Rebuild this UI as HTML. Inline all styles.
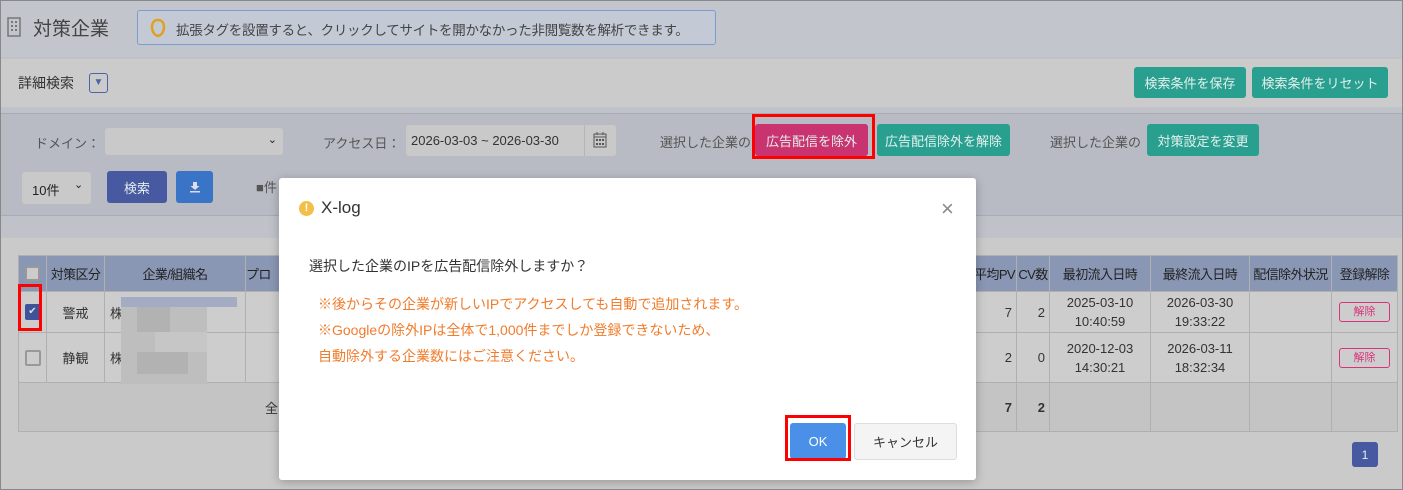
<!DOCTYPE html>
<html><head><meta charset="utf-8"><style>
*{box-sizing:border-box;margin:0;padding:0}
body{width:1403px;height:490px;position:relative;overflow:hidden;font-family:"Liberation Sans","Noto Sans CJK JP",sans-serif;font-size:13px;color:#333;background:#bfc2c9}
.a{position:absolute}
.btn{position:absolute;color:#e4efee;display:flex;align-items:center;justify-content:center;border-radius:3px;font-size:13px}
.teal{background:#29a08f}
.red{position:absolute;border:3px solid #f00}
td,th{border:1px solid #b0b0b0;font-weight:normal;text-align:center;font-size:13px;white-space:nowrap}
th{letter-spacing:-0.6px}
</style></head><body>
<div class="a" style="left:0;top:0;width:1403px;height:490px;border:1px solid #888;z-index:50;pointer-events:none"></div>
<div class="a" style="left:0;top:0;width:1403px;height:57px;background:#c2c5cc"></div>
<svg class="a" style="left:7px;top:17px" width="14" height="20" viewBox="0 0 14 20"><rect x="1" y="1" width="12" height="18" fill="none" stroke="#777" stroke-width="1.5"/><g fill="#777"><rect x="4" y="4" width="2" height="2"/><rect x="8" y="4" width="2" height="2"/><rect x="4" y="8" width="2" height="2"/><rect x="8" y="8" width="2" height="2"/><rect x="4" y="12" width="2" height="2"/><rect x="8" y="12" width="2" height="2"/></g></svg>
<div class="a" style="left:33px;top:14px;font-size:19px;color:#444">対策企業</div>
<div class="a" style="left:137px;top:10px;width:579px;height:35px;border:1px solid #7b9cd0;border-radius:3px;background:#c4cad5"></div>
<svg class="a" style="left:150px;top:18px" width="16" height="20" viewBox="0 0 16 20"><path d="M8 2C4 2 2 5 2 9c0 4 2 8 6 9 4-1 6-5 6-9 0-4-2-7-6-7z" fill="none" stroke="#e0a020" stroke-width="2.5"/></svg>
<div class="a" style="left:176px;top:19px;font-size:13.5px;color:#444;letter-spacing:-0.3px">拡張タグを設置すると、クリックしてサイトを開かなかった非閲覧数を解析できます。</div>
<div class="a" style="left:1px;top:59px;width:1401px;height:48px;background:#cbcbcb"></div>
<div class="a" style="left:18px;top:73px;font-size:14px;color:#333">詳細検索</div>
<div class="a" style="left:89px;top:73px;width:19px;height:20px;border:1px solid #4a64a8;border-radius:3px;color:#4a64a8;font-size:10px;text-align:center;line-height:18px">▼</div>
<div class="btn teal" style="left:1134px;top:67px;width:112px;height:31px">検索条件を保存</div>
<div class="btn teal" style="left:1252px;top:67px;width:136px;height:31px">検索条件をリセット</div>
<div class="a" style="left:1px;top:113px;width:1401px;height:103px;background:#b8bbc4;border-top:1px solid #a8abb4;border-bottom:1px solid #a8abb4"></div>
<div class="a" style="left:35px;top:133px;color:#555">ドメイン：</div>
<div class="a" style="left:105px;top:128px;width:178px;height:27px;background:#c9c9c9;border-radius:3px"><span class="a" style="right:6px;top:5px;font-size:11px;color:#222">⌄</span></div>
<div class="a" style="left:323px;top:133px;color:#555">アクセス日：</div>
<div class="a" style="left:406px;top:125px;width:210px;height:31px;background:#c9c9c9;border-radius:3px"></div>
<div class="a" style="left:411px;top:133px;color:#333">2026-03-03 ~ 2026-03-30</div>
<div class="a" style="left:584px;top:125px;width:1px;height:31px;background:#b5b5b5"></div>
<svg class="a" style="left:593px;top:132px" width="14" height="16" viewBox="0 0 14 16"><rect x="1" y="2" width="12" height="13" fill="none" stroke="#555"/><path d="M1 5h12M4 0v3M10 0v3" stroke="#555"/><g fill="#555"><rect x="3" y="7" width="2" height="2"/><rect x="6" y="7" width="2" height="2"/><rect x="9" y="7" width="2" height="2"/><rect x="3" y="11" width="2" height="2"/><rect x="6" y="11" width="2" height="2"/><rect x="9" y="11" width="2" height="2"/></g></svg>
<div class="a" style="left:660px;top:132px;color:#555">選択した企業の</div>
<div class="btn" style="left:755px;top:124px;width:113px;height:32px;background:#c9336f">広告配信を除外</div>
<div class="red" style="left:752px;top:114px;width:123px;height:45px"></div>
<div class="btn teal" style="left:877px;top:124px;width:133px;height:32px">広告配信除外を解除</div>
<div class="a" style="left:1050px;top:132px;color:#555">選択した企業の</div>
<div class="btn teal" style="left:1147px;top:124px;width:112px;height:32px">対策設定を変更</div>
<div class="a" style="left:22px;top:172px;width:69px;height:32px;background:#c9c9c9;border-radius:3px"></div>
<div class="a" style="left:32px;top:180px;color:#222">10件</div><div class="a" style="left:74px;top:178px;color:#222;font-size:11px">⌄</div>
<div class="btn" style="left:107px;top:171px;width:60px;height:32px;background:#4759a0">検索</div>
<div class="btn" style="left:176px;top:171px;width:37px;height:32px;background:#3a74c6"><svg width="12" height="12" viewBox="0 0 12 12"><path d="M4 1h4v4h2.5L6 9 1.5 5H4z" fill="#dde"/><rect x="1" y="10" width="10" height="1.5" fill="#dde"/></svg></div>
<div class="a" style="left:256px;top:177px;color:#555">■件</div>
<div class="a" style="left:1px;top:238px;width:1401px;height:252px;background:#cacaca"></div>
<table class="a" style="left:18px;top:255px;width:1380px;border-collapse:collapse;background:#cdcdcd;table-layout:fixed">
<colgroup><col style="width:28px"><col style="width:58px"><col style="width:141px"><col style="width:727px"><col style="width:44px"><col style="width:33px"><col style="width:101px"><col style="width:99px"><col style="width:82px"><col></colgroup>
<tr style="height:36px;background:#8a97b4;color:#222"><th><div style="width:15px;height:15px;border:2px solid #999;background:#ccc;margin:auto;border-radius:2px"></div></th><th>対策区分</th><th>企業/組織名</th><th style="text-align:left">プロ</th><th>平均PV</th><th>CV数</th><th>最初流入日時</th><th>最終流入日時</th><th>配信除外状況</th><th>登録解除</th></tr>
<tr style="height:41px"><td><div style="width:16px;height:16px;background:#3f529c;margin:auto;border-radius:2px;color:#ddd;font-size:10px;line-height:16px">✔</div></td><td>警戒</td><td style="text-align:left;padding-left:5px">株</td><td></td><td style="text-align:right;padding-right:4px">7</td><td style="text-align:right;padding-right:4px">2</td><td style="line-height:19px">2025-03-10<br>10:40:59</td><td style="line-height:19px">2026-03-30<br>19:33:22</td><td></td><td><div style="width:51px;height:20px;border:1px solid #d9347a;border-radius:3px;margin:auto;color:#d9347a;font-size:11px;line-height:18px">解除</div></td></tr>
<tr style="height:50px"><td><div style="width:16px;height:16px;border:2px solid #999;margin:auto;border-radius:2px"></div></td><td>静観</td><td style="text-align:left;padding-left:5px">株</td><td></td><td style="text-align:right;padding-right:4px">2</td><td style="text-align:right;padding-right:4px">0</td><td style="line-height:19px">2020-12-03<br>14:30:21</td><td style="line-height:19px">2026-03-11<br>18:32:34</td><td></td><td><div style="width:51px;height:20px;border:1px solid #d9347a;border-radius:3px;margin:auto;color:#d9347a;font-size:11px;line-height:18px">解除</div></td></tr>
<tr style="height:49px;background:#c4c4c4"><td colspan="4" style="text-align:left;padding-left:246px">全</td><td style="text-align:right;padding-right:4px;font-weight:bold">7</td><td style="text-align:right;padding-right:4px;font-weight:bold">2</td><td></td><td></td><td></td><td></td></tr>
</table>
<div class="a" style="left:121px;top:297px;width:116px;height:10px;background:#a3acc2"></div>
<div class="a" style="left:121px;top:307px;width:86px;height:77px;background:#bebebe"></div>
<div class="a" style="left:137px;top:307px;width:33px;height:25px;background:#b2b2b2"></div>
<div class="a" style="left:137px;top:352px;width:51px;height:22px;background:#b2b2b2"></div>
<div class="a" style="left:155px;top:332px;width:52px;height:20px;background:#c6c6c6"></div>
<div class="btn" style="left:1352px;top:442px;width:26px;height:25px;background:#4759a0;font-size:12px">1</div>
<div class="red" style="left:18px;top:284px;width:24px;height:47px"></div>
<div class="a" style="left:279px;top:178px;width:697px;height:302px;background:#fff;border-radius:3px;box-shadow:0 2px 10px rgba(0,0,0,.25)"></div>
<div class="a" style="left:299px;top:201px;width:15px;height:15px;border-radius:50%;background:#f2c04a;color:#fff;font-size:11px;font-weight:bold;text-align:center;line-height:15px">!</div>
<div class="a" style="left:321px;top:198px;font-size:17px;color:#333">X-log</div>
<div class="a" style="left:941px;top:196px;font-size:22px;color:#888;font-weight:300">×</div>
<div class="a" style="left:309px;top:256px;font-size:14px;color:#333">選択した企業のIPを広告配信除外しますか？</div>
<div class="a" style="left:318px;top:291px;font-size:14px;color:#f07c2c;line-height:26px">※後からその企業が新しいIPでアクセスしても自動で追加されます。<br>※Googleの除外IPは全体で1,000件までしか登録できないため、<br>自動除外する企業数にはご注意ください。</div>
<div class="btn" style="left:790px;top:423px;width:56px;height:36px;background:#4a90e8;color:#fff;font-size:13px">OK</div>
<div class="red" style="left:785px;top:415px;width:66px;height:46px"></div>
<div class="btn" style="left:854px;top:423px;width:103px;height:37px;background:#f4f4f4;border:1px solid #ddd;color:#333">キャンセル</div>
</body></html>
